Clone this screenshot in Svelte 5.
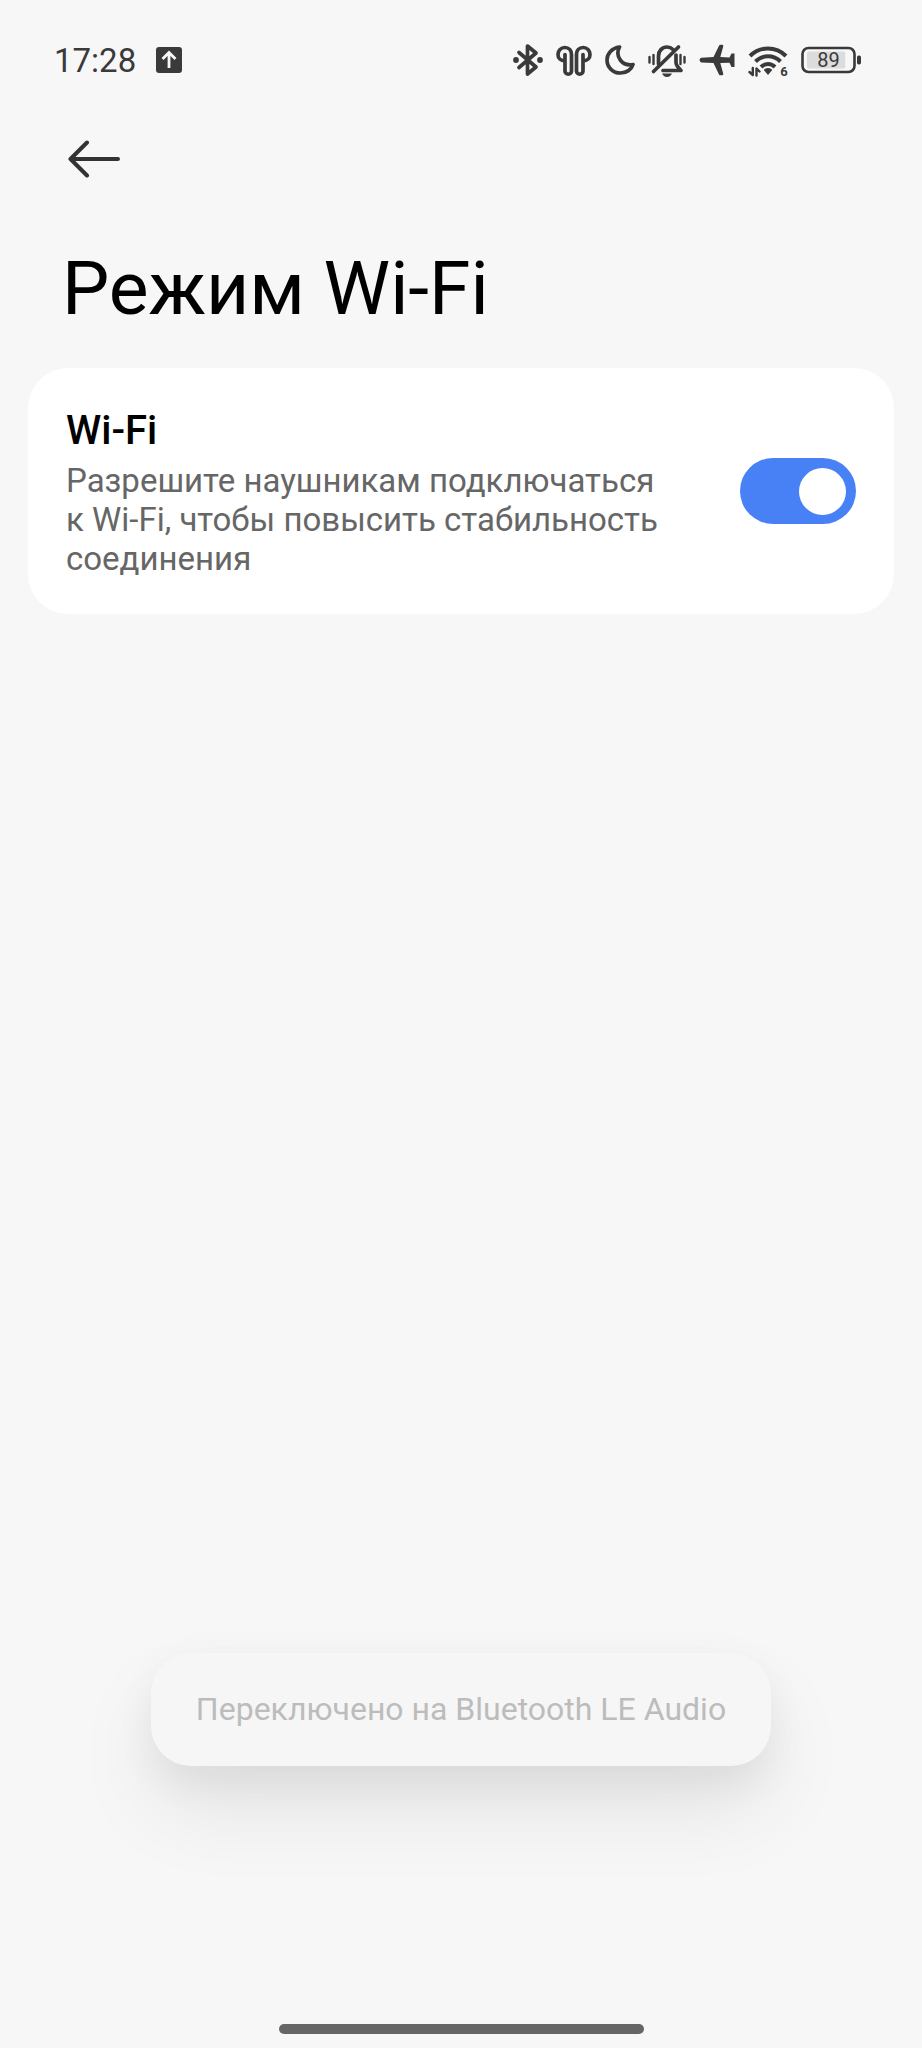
<script lang="ts">
    let wifiEnabled = $state(true);
    let battery = $state(89);
</script>

<div class="screen">
    <div class="status-bar">
        <div class="status-left">
            <span class="time">17:28</span>
            <svg width="26" height="26" viewBox="0 0 26 26" aria-hidden="true">
                <rect width="26" height="26" rx="3" fill="#3a3a3a" />
                <path d="M13 21V6.500M6.500 12L13 5.500L19.500 12" fill="none" stroke="#f7f7f7" stroke-width="2.800" />
            </svg>
        </div>

        <div class="status-icons">
            <!-- bluetooth -->
            <svg width="30" height="36" viewBox="0 0 30 36" aria-hidden="true">
                <path class="line" d="M6 10.500L23 25L14.500 32V4L23 11L6 25.500" />
                <circle cx="3" cy="18" r="2.900" />
                <circle cx="27" cy="18" r="2.900" />
            </svg>
            <!-- earbuds -->
            <svg width="36" height="36" viewBox="0 0 36 36" aria-hidden="true">
                <path class="line" d="M9 19C4.500 19 2 16 2 12.500C2 8.500 5 5.500 8.800 5.500C13 5.500 15.500 8.500 15.500 12.500V29A3.200 3.200 0 0 1 9 29V12.500" />
                <path class="line" d="M27 19C31.500 19 34 16 34 12.500C34 8.500 31 5.500 27.200 5.500C23 5.500 20.500 8.500 20.500 12.500V29A3.200 3.200 0 0 0 27 29V12.500" />
            </svg>
            <!-- do not disturb -->
            <svg width="30" height="36" viewBox="0 0 30 36" aria-hidden="true">
                <path class="line" d="M14.500 5C7 6 2 11.500 2 18C2 25.500 8 31 15.500 31C21.500 31 26.500 27.500 28 22.500C17.500 24.500 9.500 15 14.500 5Z" />
            </svg>
            <!-- silent -->
            <svg width="38" height="36" viewBox="0 0 38 36" aria-hidden="true">
                <path class="line" d="M10.500 22V14C10.500 9 14 5 19 5C21.500 5 23.500 6 25 7.500M28 13V20.500C28 23.500 30 25.500 33 28.500H15" />
                <path class="line" d="M5.500 29.500L30.500 5" />
                <path d="M14 31.500H24C22.800 34 21 35 19 35C17 35 15.200 34 14 31.500Z" />
                <path class="thin" d="M1.500 15V20.500M5.500 13V22M32.500 13V22M36.500 15V20.500" />
            </svg>
            <!-- airplane mode -->
            <svg width="36" height="36" viewBox="0 0 36 36" aria-hidden="true">
                <path d="M2.500 15.800L14.500 15.100L20 3.800C20.500 2.600 24.800 2.400 24.300 4.200L21.300 15.100L30.500 15.500L32.500 11.500H35.500V24.900H32.500L30.500 20.700L21.300 21L24.300 32C24.800 33.800 20.500 33.600 20 32.400L14.500 21L2.500 20.400C0 20 0 16.200 2.500 15.800Z" />
            </svg>
            <!-- wi-fi 6 -->
            <svg width="40" height="36" viewBox="0 0 40 36" aria-hidden="true">
                <path class="arc" d="M2 14C12 4 28 4 38 14M7.500 19.500C14.500 12.500 25.500 12.500 32.500 19.500M13 25C17 21 23 21 27 25" />
                <path d="M20 26C22.200 26 23.700 27 24.200 28L20 33L15.800 28C16.300 27 17.800 26 20 26Z" />
                <path class="thin" d="M4.800 26V33L1.500 30M8.500 33.500V26.500L11.500 29.500" />
                <text x="36" y="34" font-size="13" font-weight="700">6</text>
            </svg>
            <!-- battery -->
            <svg width="60" height="36" viewBox="0 0 60 36" role="img" aria-label="{battery}%">
                <rect x="1.500" y="6" width="52" height="24" rx="6" fill="none" stroke="#3a3a3a" stroke-width="2.600" />
                <rect x="6" y="9.500" width={battery * 0.430} height="17" rx="2" fill="#dcdcdc" />
                <rect x="56" y="13.500" width="4" height="9" rx="1.700" />
                <text x="27.500" y="25" font-size="20">{battery}</text>
            </svg>
        </div>
    </div>

    <header>
        <button class="back" aria-label="Назад">
            <svg width="52" height="38" viewBox="0 0 52 38" aria-hidden="true">
                <path d="M19 2.500L2.500 19L19 35.500M2.500 19H50" />
            </svg>
        </button>
        <h1>Режим Wi-Fi</h1>
    </header>

    <label class="card" for="wifi">
        <span class="card-text">
            <span class="card-title">Wi-Fi</span>
            <span class="card-summary">Разрешите наушникам подключаться к Wi-Fi, чтобы повысить стабильность соединения</span>
        </span>
        <input id="wifi" class="switch" type="checkbox" role="switch" bind:checked={wifiEnabled} />
    </label>

    <div class="toast" role="status">Переключено на Bluetooth LE Audio</div>

    <div class="home-bar"></div>
</div>

<style>
    :global(body) {
        background: #f7f7f7;
    }

    .screen {
        display: flex;
        flex-direction: column;
        box-sizing: border-box;
        min-height: 100vh;
        padding-bottom: 14px;
        background: #f7f7f7;
        color: #000;
        font-family: Roboto, "Noto Sans", sans-serif;
    }

    .status-bar {
        display: flex;
        justify-content: space-between;
        align-items: center;
        height: 120px;
        padding: 0 61px 0 54px;
        color: #3a3a3a;
    }

    .status-left {
        display: flex;
        align-items: center;
        gap: 20px;
    }

    .time {
        font-size: 33px;
        line-height: 39px;
    }

    .status-icons {
        display: flex;
        align-items: center;
        gap: 13px;
    }

    .status-icons svg {
        fill: #3a3a3a;
    }

    .status-icons .line,
    .status-icons .thin,
    .status-icons .arc {
        fill: none;
        stroke: #3a3a3a;
        stroke-width: 3.7;
        stroke-linecap: round;
        stroke-linejoin: round;
    }

    .status-icons .thin {
        stroke-width: 2.4;
    }

    .status-icons .arc {
        stroke-width: 4;
        stroke-linecap: butt;
    }

    .status-icons text {
        text-anchor: middle;
    }

    header {
        padding: 20px 62px 0;
    }

    .back {
        display: block;
        padding: 0 6px;
        border: none;
        background: none;
        cursor: pointer;
    }

    .back svg {
        display: block;
        fill: none;
        stroke: #333;
        stroke-width: 4;
        stroke-linecap: round;
        stroke-linejoin: round;
    }

    h1 {
        margin: 66px 0 36px;
        font-size: 75px;
        font-weight: 400;
        line-height: 88px;
    }

    .card {
        display: flex;
        align-items: center;
        gap: 68px;
        margin: 0 28px;
        padding: 36px 38px;
        border-radius: 40px;
        background: #fff;
    }

    .card-text {
        display: flex;
        flex: 1;
        flex-direction: column;
        gap: 3px;
    }

    .card-title {
        font-size: 40px;
        font-weight: 500;
        line-height: 54px;
    }

    .card-summary {
        color: #666;
        font-size: 33px;
        line-height: 39px;
    }

    .switch {
        display: flex;
        flex: none;
        align-items: center;
        box-sizing: border-box;
        width: 116px;
        height: 66px;
        margin: 0;
        padding: 0 10px;
        border-radius: 33px;
        background: #d9d9d9;
        appearance: none;
        cursor: pointer;
    }

    .switch::before {
        content: "";
        width: 47px;
        height: 47px;
        border-radius: 50%;
        background: #fff;
    }

    .switch:checked {
        justify-content: flex-end;
        background: #4880f6;
    }

    .toast {
        align-self: center;
        margin: auto 28px 258px;
        padding: 37px 45px;
        border-radius: 40px;
        background: #f6f6f6;
        box-shadow: 0 44px 84px rgba(0, 0, 0, 0.08), 0 16px 40px rgba(0, 0, 0, 0.06);
        color: #bcbcbc;
        font-size: 32px;
        line-height: 39px;
    }

    .home-bar {
        align-self: center;
        width: 365px;
        max-width: 60%;
        height: 10px;
        border-radius: 5px;
        background: #666;
    }
</style>
